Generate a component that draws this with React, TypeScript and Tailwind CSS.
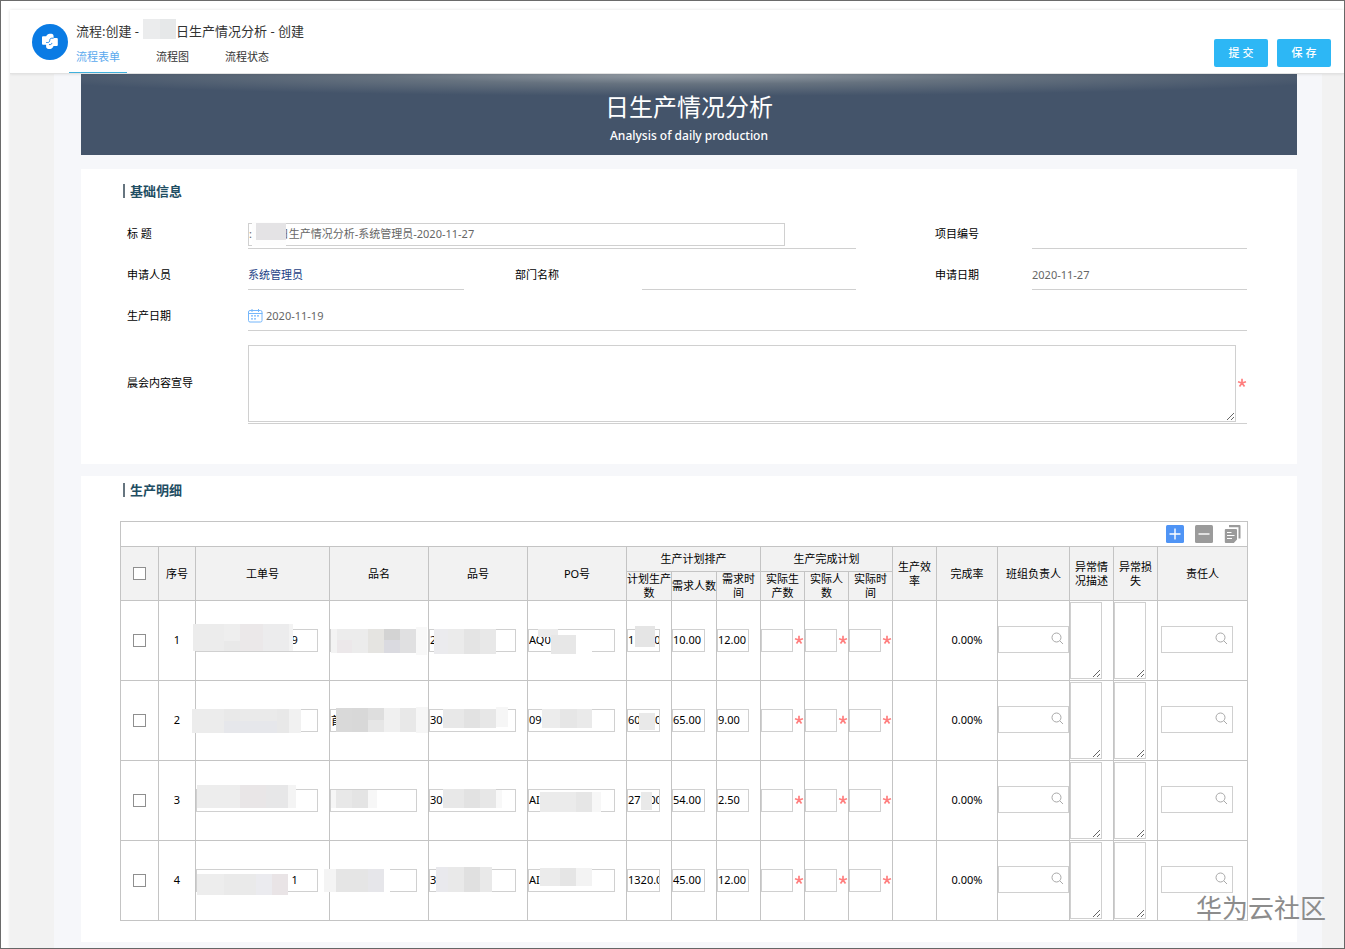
import type { ReactNode } from "react";

type Tile = [x: number, y: number, w: number, h: number, fill: string];

type Row = {
  order: string;
  name: string;
  code: string;
  po: string;
  plan: string;
  people: string;
  time: string;
  masks: Record<string, Tile[]>;
};

const COLUMNS = [38, 37, 134, 99, 99, 99, 45, 45, 44, 44, 44, 44, 44, 61, 72, 44, 44, 90];

const ROWS: Row[] = [
  {
    order: "9".padStart(34),
    name: "",
    code: "2",
    po: "AQ0",
    plan: "1" + "0".padStart(8),
    people: "10.00",
    time: "12.00",
    masks: {
      order: [
        [-3, 23, 31, 27, "#ececec"],
        [28, 23, 16, 17, "#eeeeee"],
        [28, 40, 16, 10, "#e9e9e9"],
        [44, 23, 23, 27, "#ebe8e9"],
        [67, 23, 26, 27, "#ececed"],
        [93, 23, 4, 27, "#f3f3f3"],
      ],
      name: [
        [1, 28, 6, 24, "#f3f3f3"],
        [7, 28, 15, 11, "#ececec"],
        [7, 39, 15, 13, "#ece8ea"],
        [22, 28, 16, 24, "#ececec"],
        [38, 28, 16, 24, "#e5e4e1"],
        [54, 28, 16, 11, "#d3d3d3"],
        [54, 39, 16, 13, "#dadae0"],
        [70, 28, 16, 24, "#e0e0e1"],
        [86, 26, 11, 28, "#f8f8f8"],
      ],
      code: [
        [5, 28, 14, 25, "#ebebee"],
        [19, 28, 16, 25, "#ebebeb"],
        [35, 28, 16, 25, "#e4e4e4"],
        [51, 28, 16, 25, "#e8e8e8"],
      ],
      po: [
        [23, 41, 41, 12, "#ffffff"],
        [10, 28, 20, 8, "#ebebeb"],
        [23, 34, 25, 19, "#e7e7e7"],
      ],
      plan: [[8, 25, 20, 21, "#e5e5e5"]],
    },
  },
  {
    order: "",
    name: "首",
    code: "30",
    po: "09",
    plan: "60" + "0".padStart(6),
    people: "65.00",
    time: "9.00",
    masks: {
      order: [
        [-4, 28, 32, 24, "#ececec"],
        [28, 28, 16, 12, "#e9e9e9"],
        [28, 40, 53, 12, "#e6e7eb"],
        [44, 28, 37, 12, "#eaeaea"],
        [81, 28, 12, 24, "#e8e8e8"],
        [93, 28, 12, 24, "#f1f1f1"],
      ],
      name: [
        [6, 27, 16, 24, "#d9d9d9"],
        [22, 27, 16, 24, "#d8d8d8"],
        [38, 27, 16, 12, "#dedede"],
        [38, 39, 16, 12, "#e6e6e6"],
        [54, 27, 16, 24, "#f0f0f0"],
        [70, 27, 16, 24, "#e8e8e8"],
        [86, 26, 12, 26, "#f6f6f6"],
      ],
      code: [
        [14, 28, 21, 19, "#e8e8e8"],
        [35, 28, 16, 19, "#e2e2e2"],
        [51, 28, 16, 19, "#e7e7e7"],
        [67, 26, 12, 20, "#f6f6f6"],
      ],
      po: [
        [14, 28, 18, 19, "#ececec"],
        [32, 28, 17, 19, "#e6e6e6"],
        [49, 28, 15, 19, "#eaeaea"],
      ],
      plan: [[12, 32, 16, 17, "#e9e9e9"]],
    },
  },
  {
    order: "",
    name: "",
    code: "30",
    po: "AI",
    plan: "27" + "00".padStart(5),
    people: "54.00",
    time: "2.50",
    masks: {
      order: [
        [1, 24, 43, 23, "#ededed"],
        [44, 24, 26, 23, "#e9e6e7"],
        [70, 24, 22, 23, "#e7e7e8"],
        [92, 24, 8, 23, "#f4f4f4"],
      ],
      name: [
        [1, 29, 5, 18, "#f6f6f6"],
        [6, 29, 16, 18, "#e8e8e8"],
        [22, 29, 16, 18, "#e4e4e4"],
        [38, 29, 9, 18, "#f7f7f7"],
      ],
      code: [
        [14, 28, 21, 19, "#e8e8e8"],
        [35, 28, 16, 19, "#e2e2e2"],
        [51, 28, 16, 19, "#e7e7e7"],
        [67, 29, 6, 18, "#f8f8f8"],
      ],
      po: [
        [12, 31, 36, 20, "#ebebeb"],
        [48, 31, 16, 20, "#e6e6e6"],
        [64, 31, 9, 20, "#f7f7f7"],
      ],
      plan: [[14, 31, 11, 18, "#e9e9e9"]],
    },
  },
  {
    order: "1".padStart(34),
    name: "",
    code: "3",
    po: "AI",
    plan: "1320.00",
    people: "45.00",
    time: "12.00",
    masks: {
      order: [
        [1, 33, 27, 21, "#ededed"],
        [28, 33, 32, 21, "#eaeaea"],
        [60, 33, 16, 21, "#ebebef"],
        [76, 33, 16, 21, "#e9e4e6"],
      ],
      name: [
        [-6, 28, 12, 23, "#f4f4f4"],
        [6, 28, 32, 23, "#e5e5e5"],
        [38, 28, 16, 23, "#e6e6ea"],
        [54, 27, 6, 25, "#ffffff"],
      ],
      code: [
        [7, 26, 12, 25, "#e9e9ed"],
        [19, 26, 16, 25, "#e9e9e9"],
        [35, 26, 16, 25, "#e0e0e0"],
        [51, 26, 12, 25, "#e9e9e9"],
      ],
      po: [
        [12, 27, 20, 18, "#ebebeb"],
        [32, 27, 16, 18, "#e5e5e5"],
        [48, 27, 16, 18, "#f3f3f3"],
      ],
      plan: [],
    },
  },
];

const Mask = (props: { tiles: Tile[] }) => (
  <svg
    aria-hidden="true"
    className="absolute left-0 top-0 w-full h-full overflow-visible pointer-events-none"
    shapeRendering="crispEdges"
  >
    {props.tiles.map(([x, y, w, h, fill], i) => (
      <rect key={i} x={x} y={y} width={w} height={h} fill={fill} />
    ))}
  </svg>
);

const Logo = () => (
  <svg viewBox="0 0 36 36" className="w-9 h-9 shrink-0" aria-hidden="true">
    <circle cx="18" cy="18" r="18" fill="#0a7be4" />
    <path
      fill="#fff"
      d="M10 13.200q0-1 1-1h3.200c.6-1.300 2-2.400 3.400-2.400h1.800c1.400 0 2.200 1 2.200 2.400v1.900h3.200q1 0 1 1v6q0 1-1 1h-3.300c-.5 1.600-1.800 2.900-3.300 2.900h-1.600c-1.500 0-2.500-1-2.500-2.500v-1.700h-3.100q-1 0-1-1z"
    />
    <path
      fill="none"
      stroke="#0a7be4"
      strokeWidth="0.900"
      d="M21.600 14.200h-1.800c-1.400 0-2 .8-2 2 0 1.500-.8 2.300-2.200 2.300h-1.400M17 20.600h1.200c1 0 1.600-.6 1.600-1.700"
    />
  </svg>
);

const CalendarIcon = () => (
  <svg viewBox="0 0 15 14" className="w-[15px] h-[14px] shrink-0" fill="none" stroke="#74b6fb" aria-hidden="true">
    <rect x="0.500" y="1.500" width="13.500" height="11.500" rx="1.500" />
    <path d="M0.500 4.500h14M4 0v3M10.500 0v3" />
    <path strokeWidth="1.400" strokeDasharray="2 1" d="M3 6.900h8.500M3 9.900h5" />
  </svg>
);

const SearchIcon = () => (
  <svg viewBox="0 0 13 13" className="w-[13px] h-[13px]" fill="none" stroke="#a9a9a9" aria-hidden="true">
    <circle cx="5.500" cy="5.500" r="4.500" />
    <path d="M8.800 8.800l3.200 3.200" />
  </svg>
);

const Star = () => (
  <span className="w-[11px] shrink-0 flex justify-center pb-[2px]">
    <svg viewBox="0 0 10 10" className="w-[10px] h-[10px]" stroke="#ff7f7f" strokeWidth="1.700" aria-hidden="true">
      <path d="M5 .8V5M5 5L1 3.700M5 5l4-1.300M5 5L2.500 8.600M5 5l2.500 3.600" />
    </svg>
  </span>
);

const SectionTitle = (props: { children: ReactNode }) => (
  <h2 className="ml-[42px] flex items-center gap-[5px] h-5 text-[13px] font-bold text-[#1f4e63]">
    <span className="w-[2px] h-[14px] bg-[#66757f]" />
    {props.children}
  </h2>
);

const Label = (props: { htmlFor?: string; className?: string; children: ReactNode }) => (
  <label htmlFor={props.htmlFor} className={`flex items-center pb-px text-black ${props.className ?? ""}`}>
    {props.children}
  </label>
);

const TextCell = (props: { label: string; value?: string; required?: boolean; tiles?: Tile[] }) => (
  <td className="relative border border-[#c4c4c4] p-0">
    <div className="flex items-center">
      <input
        aria-label={props.label}
        defaultValue={props.value}
        className="flex-1 min-w-0 h-[23px] border border-[#d0d0d0] bg-white pb-[2px] text-black outline-none"
      />
      {props.required ? <Star /> : <span className="w-[11px] shrink-0" />}
    </div>
    {props.tiles && <Mask tiles={props.tiles} />}
  </td>
);

const SearchBox = (props: { label: string; className: string }) => (
  <div className={`flex h-[27px] mb-[3px] border border-[#d0d0d0] bg-white ${props.className}`}>
    <input aria-label={props.label} className="flex-1 min-w-0 px-px outline-none" />
    <button type="button" aria-label="搜索" className="shrink-0 pr-1 pb-[2px]">
      <SearchIcon />
    </button>
  </div>
);

const AreaCell = (props: { label: string }) => (
  <td className="border border-[#c4c4c4] p-0 align-top">
    <textarea
      aria-label={props.label}
      className="block mt-px w-8 h-[77px] border border-[#d0d0d0] bg-white resize outline-none"
    />
  </td>
);

const Th = (props: { rowSpan?: number; colSpan?: number; className?: string; children: ReactNode }) => (
  <th
    rowSpan={props.rowSpan}
    colSpan={props.colSpan}
    className={`border border-[#c4c4c4] bg-[#f2f2f2] p-0 font-normal leading-[14px] ${props.className ?? ""}`}
  >
    {props.children}
  </th>
);

const Check = (props: { label: string }) => (
  <input
    type="checkbox"
    aria-label={props.label}
    className="block mx-auto appearance-none w-[13px] h-[13px] border border-[#8f8f8f] bg-white checked:bg-[#4f94f5]"
  />
);

const Header = () => (
  <header className="relative z-10 flex justify-between h-16 pl-[22px] pr-[13px] bg-white border-b border-[#e2e2e2] shadow-[0_0_3px_rgba(0,0,0,0.12)]">
    <div className="flex">
      <div className="pt-[14px]">
        <Logo />
      </div>
      <div className="flex flex-col">
        <h1 className="flex items-center ml-2 pt-[9px] text-[13px] leading-5 text-[#333]">
          <span>流程:创建 -</span>
          <span className="flex w-[33px] h-5 ml-1 mb-1">
            <span className="flex-1 bg-[#ebeced]" />
            <span className="flex-1 bg-[#e6e8e9]" />
          </span>
          <span>日生产情况分析 - 创建</span>
        </h1>
        <nav className="flex gap-[22px] ml-px text-[11px] leading-[28px] h-[30px] text-[#333]">
          <a href="#form" className="px-[7px] text-[#5aa9ee] border-b border-[#3fb0dc]">
            流程表单
          </a>
          <a href="#chart" className="px-[7px]">
            流程图
          </a>
          <a href="#status" className="px-[7px]">
            流程状态
          </a>
        </nav>
      </div>
    </div>
    <div className="flex gap-[9px] pt-[29px] text-[11px] font-medium text-white">
      <button type="button" className="w-[54px] h-7 rounded-xs bg-[#2db7f5]">
        提 交
      </button>
      <button type="button" className="w-[54px] h-7 rounded-xs bg-[#2db7f5]">
        保 存
      </button>
    </div>
  </header>
);

const BasicInfo = () => (
  <section className="mt-[14px] pt-3 pb-10 bg-white">
    <SectionTitle>基础信息</SectionTitle>
    <div className="grid grid-cols-[121fr_216fr_178fr_214fr_176fr_215fr] auto-rows-[minmax(41px,auto)] mt-[7px] ml-[46px] mr-[50px] text-[#666]">
      <Label htmlFor="title" className="pt-3">
        标 题
      </Label>
      <div className="relative col-span-3 flex items-end pb-[2px] border-b border-[#d0d0d0]">
        <input
          id="title"
          defaultValue={":         日生产情况分析-系统管理员-2020-11-27"}
          className="w-[537px] max-w-full h-[23px] pb-[3px] border border-[#d0d0d0] outline-none"
        />
        <Mask
          tiles={[
            [4, 14, 34, 24, "#fdfdfd"],
            [8, 15, 30, 17, "#e4e3e5"],
          ]}
        />
      </div>
      <Label htmlFor="project" className="pl-[79px] pt-3">
        项目编号
      </Label>
      <div className="flex items-end border-b border-[#d0d0d0]">
        <input id="project" className="w-full h-7 outline-none" />
      </div>

      <Label className="pt-3">申请人员</Label>
      <div className="flex items-center pt-3 border-b border-[#d0d0d0]">
        <a href="#user" className="text-[#1c3f86]">
          系统管理员
        </a>
      </div>
      <Label className="pl-[51px] pt-3">部门名称</Label>
      <div className="border-b border-[#d0d0d0]" />
      <Label className="pl-[79px] pt-3">申请日期</Label>
      <div className="flex items-center pt-3 border-b border-[#d0d0d0]">2020-11-27</div>

      <Label className="pt-3">生产日期</Label>
      <div className="col-span-5 flex items-center gap-[3px] pt-3 border-b border-[#d0d0d0]">
        <CalendarIcon />
        2020-11-19
      </div>

      <Label htmlFor="content" className="pt-3">
        晨会内容宣导
      </Label>
      <div className="col-span-5 flex items-center pt-[14px] pb-px border-b border-[#d0d0d0]">
        <textarea id="content" className="flex-1 min-w-0 h-[77px] border border-[#d0d0d0] outline-none" />
        <Star />
      </div>
    </div>
  </section>
);

const Toolbar = () => (
  <div className="flex items-center justify-end gap-[11px] h-[25px] pr-[5px] border border-b-0 border-[#c4c4c4]">
    <button type="button" aria-label="添加">
      <svg viewBox="0 0 18 18" className="w-[18px] h-[18px]">
        <rect width="18" height="18" rx="1.500" fill="#4f94f5" />
        <path d="M3.500 9h11M9 3.500v11" stroke="#fff" strokeWidth="1.400" />
      </svg>
    </button>
    <button type="button" aria-label="删除">
      <svg viewBox="0 0 18 18" className="w-[18px] h-[18px]">
        <rect width="18" height="18" rx="1.500" fill="#9b9b9b" />
        <path d="M3.500 9h11" stroke="#fff" strokeWidth="1.400" />
      </svg>
    </button>
    <button type="button" aria-label="复制">
      <svg viewBox="0 0 18 18" className="w-[18px] h-[18px]" fill="#9b9b9b">
        <path d="M5 0h10.500a1 1 0 0 1 1 1v12.500h-2V2.200H5z" />
        <path d="M1.800 4H12a1 1 0 0 1 1 1v9.500L9.800 18h-8a1 1 0 0 1-1-1V5a1 1 0 0 1 1-1z" />
        <path d="M3 7.500h4.500M3 10.500h7.500M3 13.500h5" stroke="#fff" strokeWidth="1.200" />
      </svg>
    </button>
  </div>
);

const Details = () => (
  <section className="mt-3 pt-1 pb-[21px] bg-white">
    <SectionTitle>生产明细</SectionTitle>
    <div className="mt-[21px] ml-[39px] mr-[49px]">
      <Toolbar />
      <table className="w-full table-fixed border-collapse text-center text-black">
        <colgroup>
          {COLUMNS.map((width, i) => (
            <col key={i} style={{ width }} />
          ))}
        </colgroup>
        <thead>
          <tr className="h-[25px]">
            <Th rowSpan={2}>
              <Check label="全选" />
            </Th>
            <Th rowSpan={2}>序号</Th>
            <Th rowSpan={2}>工单号</Th>
            <Th rowSpan={2}>品名</Th>
            <Th rowSpan={2}>品号</Th>
            <Th rowSpan={2}>PO号</Th>
            <Th colSpan={3}>生产计划排产</Th>
            <Th colSpan={3}>生产完成计划</Th>
            <Th rowSpan={2}>生产效率</Th>
            <Th rowSpan={2}>完成率</Th>
            <Th rowSpan={2}>班组负责人</Th>
            <Th rowSpan={2}>异常情况描述</Th>
            <Th rowSpan={2}>异常损失</Th>
            <Th rowSpan={2}>责任人</Th>
          </tr>
          <tr className="h-[29px]">
            <Th>计划生产数</Th>
            <Th>需求人数</Th>
            <Th>需求时间</Th>
            <Th>实际生产数</Th>
            <Th>实际人数</Th>
            <Th>实际时间</Th>
          </tr>
        </thead>
        <tbody>
          {ROWS.map((row, i) => (
            <tr key={i} className="h-20">
              <td className="border border-[#c4c4c4] p-0">
                <Check label={`选择 ${i + 1}`} />
              </td>
              <td className="border border-[#c4c4c4] p-0 pb-[2px]">{i + 1}</td>
              <TextCell label="工单号" value={row.order} tiles={row.masks.order} />
              <TextCell label="品名" value={row.name} tiles={row.masks.name} />
              <TextCell label="品号" value={row.code} tiles={row.masks.code} />
              <TextCell label="PO号" value={row.po} tiles={row.masks.po} />
              <TextCell label="计划生产数" value={row.plan} tiles={row.masks.plan} />
              <TextCell label="需求人数" value={row.people} />
              <TextCell label="需求时间" value={row.time} />
              <TextCell label="实际生产数" required />
              <TextCell label="实际人数" required />
              <TextCell label="实际时间" required />
              <td className="border border-[#c4c4c4] p-0" />
              <td className="border border-[#c4c4c4] p-0 pb-[2px]">0.00%</td>
              <td className="border border-[#c4c4c4] p-0">
                <SearchBox label="班组负责人" className="w-full" />
              </td>
              <AreaCell label="异常情况描述" />
              <AreaCell label="异常损失" />
              <td className="border border-[#c4c4c4] p-0">
                <SearchBox label="责任人" className="w-[72px] ml-[3px]" />
              </td>
            </tr>
          ))}
        </tbody>
      </table>
    </div>
  </section>
);

export default function App() {
  return (
    <div className="relative min-h-screen pt-[9px] pl-[9px] border border-[#6b6b6b] bg-white text-[11px] leading-4 font-['Noto_Sans','Noto_Sans_CJK_SC',sans-serif]">
      <Header />
      <main className="pl-11 pr-[22px] bg-[#f2f2f2] shadow-[0_0_3px_rgba(0,0,0,0.12)]">
        <div className="pl-[27px] pr-[25px] pb-[6px] bg-[#f6f7fa]">
          <div className="h-[81px] pt-4 text-center text-white bg-[#44546a] bg-[radial-gradient(ellipse_58%_22px_at_50%_0,#98a0a8,#66727f_45%,transparent)]">
            <p className="text-2xl leading-[34px]">日生产情况分析</p>
            <p className="text-xs font-medium leading-6">Analysis of daily production</p>
          </div>
          <BasicInfo />
          <Details />
        </div>
      </main>
      <p className="absolute right-[18px] bottom-6 text-[26px] leading-8 text-[#8c8c8c]">华为云社区</p>
    </div>
  );
}
